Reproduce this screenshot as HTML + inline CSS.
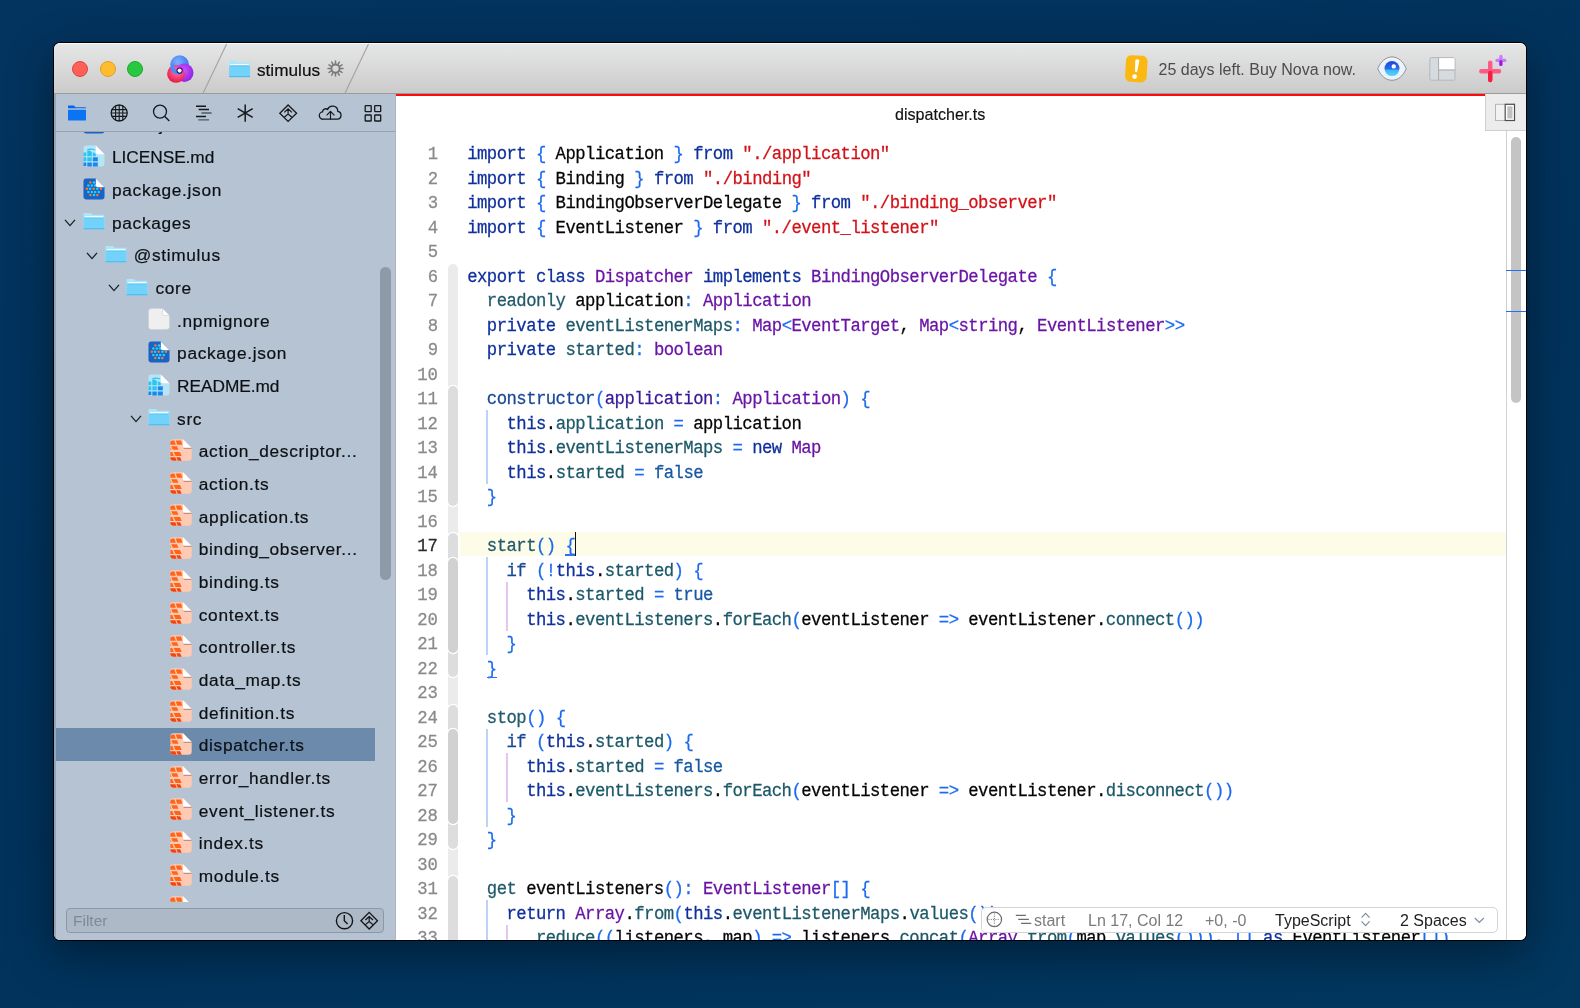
<!DOCTYPE html>
<html><head><meta charset="utf-8">
<style>
*{margin:0;padding:0;box-sizing:border-box}
html,body{width:1580px;height:1008px;overflow:hidden}
body{background:linear-gradient(160deg,#03345f 0%,#01325c 55%,#02375f 100%);font-family:"Liberation Sans",sans-serif;position:relative}
.abs{position:absolute}
#win{position:absolute;left:53px;top:42px;width:1474px;height:899px;border-radius:7px;background:#000;box-shadow:0 14px 45px rgba(0,0,0,.4);overflow:hidden}
#inner{position:absolute;left:1px;top:1px;width:1472px;height:897px;border-radius:6px;overflow:hidden;background:#fff}
/* coords inside #inner are offset by (54,43) */
#title{position:absolute;left:54px;top:43px;width:1472px;height:51px;overflow:hidden;background:linear-gradient(#e6e7e7,#d9d9d9 50%,#cbcbcb);border-bottom:1px solid #9c9c9c;box-shadow:inset 0 1px 0 #fafafa;z-index:5}
#sidebar{position:absolute;left:54px;top:93px;width:342px;height:847px;background:#b5c3d2;border-right:1px solid #abb4be;overflow:hidden}
#editor{position:absolute;left:396px;top:93px;width:1130px;height:847px;background:#fff;overflow:hidden}
#pg{position:absolute;left:-54px;top:-43px;width:1580px;height:1008px;will-change:transform}
.g{position:absolute;left:-54px;top:-93px;width:1580px;height:1008px}
#title .g{top:-43px}
#editor .g{left:-396px}
.cl{position:absolute;left:467.2px;height:24.5px;line-height:24.5px;font-family:"Liberation Mono",monospace;font-size:17.3px;letter-spacing:-0.5457px;white-space:pre;color:#050505;transform:scaleY(1.1);transform-origin:0 16.5px;-webkit-text-stroke:0.25px currentColor}
.ln{position:absolute;left:400px;width:38px;text-align:right;height:24.5px;line-height:24.5px;font-family:"Liberation Mono",monospace;font-size:17.3px;color:#8a8a8a;transform:scaleY(1.1);transform-origin:0 16.5px;-webkit-text-stroke:0.25px currentColor}
.ln.cur{color:#2a2a2a}
.k{color:#0f309c}.d{color:#215a6c}.c{color:#1a4898}.t{color:#6a14a6}.p{color:#1c5868}.v{color:#3a1898}.o{color:#1a6af0}.s{color:#d21218}.b{color:#1758a4}.n{color:#050505}
.u{}
.fold{position:absolute;left:448px;width:9.5px;border-radius:5px;box-shadow:0 0 0 1.2px #fff}
.guide{position:absolute;width:1.6px}
.fn{position:absolute;font-size:17.3px;letter-spacing:0.68px;line-height:24px;color:#0c1014;white-space:nowrap;-webkit-text-stroke:0.2px currentColor}
.ts{-webkit-text-stroke:0.2px currentColor}
.ico,.chev{position:absolute}
</style></head><body>

<svg width="0" height="0" style="position:absolute">
<defs>
 <symbol id="i-ts" viewBox="0 0 22 22">
  <path d="M3.2 0.3 H13 L21.7 9 V18.6 Q21.7 21.8 18.5 21.8 H3.5 Q0.3 21.8 0.3 18.6 V3.5 Q0.3 0.3 3.2 0.3Z" fill="#ffcab4"/>
  <g fill="#ff6418">
   <path d="M2.5 1.6 H4.4 L5.8 5.7 H0.4 V3.2 Q0.6 1.6 2.5 1.6Z"/>
   <path d="M5.8 1.6 H11 L12.4 5.7 H7.2Z"/>
   <path d="M1.2 7.3 H6.9 L8.5 10.8 H2.8Z M0.4 8.2 L1.4 10.8 H0.4Z"/>
   <path d="M0.4 12.9 H2.3 L3.9 16.9 H0.4Z"/>
   <path d="M3.7 12.9 H9.9 L11.7 16.9 H5.5Z"/>
  </g>
  <g fill="#f2440e">
   <path d="M0.4 18.2 H5.3 L6.7 21.8 H3.2 Q0.6 21.6 0.4 19.2Z"/>
   <path d="M6.3 18.2 H10.1 L11.7 21.8 H7.8Z"/>
  </g>
  <path d="M13 0.3 L21.7 9 H15.6 Q13 9 13 6.4Z" fill="#fff"/>
  <path d="M13.6 9.3 H21.6" stroke="#b07868" stroke-width="0.9"/>
 </symbol>
 <symbol id="i-md" viewBox="0 0 22 22">
  <path d="M3 0.5 H12.8 L21.5 9.2 V18.5 Q21.5 21.5 18.5 21.5 H3.5 Q0.5 21.5 0.5 18.5 V3.5 Q0.5 0.5 3 0.5Z" fill="#b5e5f6"/>
  <g fill="#2ec3f0">
   <path d="M0.5 7.5 H3.3 V11.2 H0.5Z"/>
   <path d="M4.3 11.2 V6 Q6.5 4.5 8.8 7 V11.2Z"/>
   <path d="M9.8 11.2 V7.5 Q11.5 7 12.8 9.2 V11.2Z"/>
   <path d="M4 4.6 Q7.5 2.5 11.8 4.2 L12.3 5.4 Q8 4 4.3 5.6Z"/>
   <path d="M0.5 12.3 H3.3 V16.3 H0.5Z"/>
   <path d="M4.3 12.3 H8.8 V16.3 H4.3Z"/>
  </g>
  <g fill="#1a86ef">
   <path d="M9.8 12.3 H14.8 V16.3 H9.8Z"/>
   <path d="M0.5 17.4 H3.3 V21 H0.5Z M4.3 17.4 H8.8 V21.5 H4.3Z M9.8 17.4 H14.8 V21.5 H9.8Z"/>
  </g>
  <path d="M12.8 0.5 L21.5 9.2 H15.3 Q12.8 9.2 12.8 6.7Z" fill="#fff"/>
 </symbol>
 <symbol id="i-json" viewBox="0 0 22 22">
  <path d="M3 0.5 H12.8 L21.5 9.2 V18.5 Q21.5 21.5 18.5 21.5 H3.5 Q0.5 21.5 0.5 18.5 V3.5 Q0.5 0.5 3 0.5Z" fill="#1763c6"/>
  <g fill="#23d2f6"><circle cx="11" cy="4.5" r="1.25"/><circle cx="5.4" cy="7.4" r="1.25"/><circle cx="8.9" cy="7.4" r="1.25"/><circle cx="12.2" cy="7.4" r="1.25"/><circle cx="7.1" cy="10.7" r="1.25"/><circle cx="14.3" cy="10.7" r="1.25"/><circle cx="5.4" cy="13.9" r="1.25"/><circle cx="8.9" cy="13.9" r="1.25"/><circle cx="12.2" cy="13.9" r="1.25"/><circle cx="15.8" cy="13.9" r="1.25"/><circle cx="11" cy="17" r="1.25"/></g>
  <g fill="#ff7628"><circle cx="7.4" cy="4.5" r="1.25"/><circle cx="3.9" cy="10.7" r="1.25"/><circle cx="10.7" cy="10.7" r="1.25"/><circle cx="17.9" cy="10.7" r="1.25"/><circle cx="7.4" cy="17" r="1.25"/><circle cx="14.3" cy="17" r="1.25"/></g>
  <path d="M12.8 0.5 L21.5 9.2 H15.3 Q12.8 9.2 12.8 6.7Z" fill="#fff"/>
 </symbol>
 <symbol id="i-doc" viewBox="0 0 22 22">
  <path d="M3 0.5 H14.5 L21.5 7.5 V18.5 Q21.5 21.5 18.5 21.5 H3.5 Q0.5 21.5 0.5 18.5 V3.5 Q0.5 0.5 3 0.5Z" fill="#efefef" stroke="#c9ced4" stroke-width="0.6"/>
  <path d="M14.5 0.5 L21.5 7.5 H16.5 Q14.5 7.5 14.5 5.5Z" fill="#fff" stroke="#c9ced4" stroke-width="0.6"/>
 </symbol>
 <symbol id="i-folder" viewBox="0 0 22 18">
  <path d="M1.5 1 H8 L9.5 2.8 H20.5 Q21.5 2.8 21.5 4 V16.5 Q21.5 17.5 20.5 17.5 H1.5 Q0.5 17.5 0.5 16.5 V2 Q0.5 1 1.5 1Z" fill="#ade6f9"/>
  <path d="M0.5 5.6 H21.5 V16.4 Q21.5 17.6 20.3 17.6 H1.7 Q0.5 17.6 0.5 16.4Z" fill="#72d2fa"/>
  <path d="M0.5 16.8 H21.5" stroke="#5aaedb" stroke-width="0.9"/>
  <path d="M2 4.8 H20" stroke="#ffffff" stroke-width="1.3"/>
  <path d="M2 6 H20" stroke="#4fc8f6" stroke-width="0.8"/>
 </symbol>
 <symbol id="i-chev" viewBox="0 0 12 8">
  <path d="M1 0.9 L6 6.6 L11 0.9" stroke="#1b1f24" stroke-width="1.3" fill="none"/>
 </symbol>
</defs>
</svg>

<div id="win"><div id="inner"><div id="pg">
 <div id="title"><div class="g">
  <div class="abs" style="left:72.2px;top:61.4px;width:16px;height:16px;border-radius:50%;background:#fe5f57;border:0.5px solid #e0443e"></div>
  <div class="abs" style="left:99.6px;top:61.4px;width:16px;height:16px;border-radius:50%;background:#febc2e;border:0.5px solid #dea123"></div>
  <div class="abs" style="left:126.9px;top:61.4px;width:16px;height:16px;border-radius:50%;background:#28c840;border:0.5px solid #1aab29"></div>
  <svg class="abs" style="left:0;top:0" width="1580" height="100">
   <defs>
    <radialGradient id="gb" cx="0.4" cy="0.35" r="0.7"><stop offset="0" stop-color="#7fb0ff"/><stop offset="1" stop-color="#2f6ff2"/></radialGradient>
    <radialGradient id="gr" cx="0.55" cy="0.35" r="0.7"><stop offset="0" stop-color="#ff7ab8"/><stop offset="1" stop-color="#e8103a"/></radialGradient>
    <radialGradient id="gp" cx="0.4" cy="0.4" r="0.7"><stop offset="0" stop-color="#d45cff"/><stop offset="1" stop-color="#8a1ae0"/></radialGradient>
    <linearGradient id="giris" x1="0" y1="0" x2="0" y2="1"><stop offset="0" stop-color="#1a46dc"/><stop offset="0.52" stop-color="#2a6cf0"/><stop offset="0.62" stop-color="#3fb8f6"/><stop offset="1" stop-color="#5ad6fa"/></linearGradient>
   </defs>
   <!-- nova logo -->
   <circle cx="179.6" cy="64.6" r="9.3" fill="url(#gb)"/>
   <circle cx="184.3" cy="72.8" r="9.2" fill="url(#gp)"/>
   <circle cx="176" cy="73.9" r="8.9" fill="url(#gr)"/>
   <path d="M170.6 66 Q170.5 74 178 74.5 Q183 74.5 183.5 70 Q180 72.5 176.5 70 Q173.5 68 174 63 Z" fill="#4b8cf7"/>
   <path d="M176 66.5 Q179.5 64.5 183 66.5 Q185 69 183.5 72 Q181 67.5 176 66.5Z" fill="#c83cf5"/>
   <circle cx="179.6" cy="70.6" r="3.1" fill="#2a0a5a"/>
   <circle cx="179.6" cy="70.6" r="2.1" fill="#fff4e8"/>
   <!-- slashes -->
   <path d="M226.6 44 L203.2 93 M368.5 44 L345.1 93" stroke="#a2a2a2" stroke-width="1.1"/>
   <!-- folder -->
   <svg x="228.6" y="59.8" width="22" height="18" viewBox="0 0 22 18"><use href="#i-folder"/></svg>
   <!-- gear -->
   <g transform="translate(335.5 68.6)" stroke="#7a7a7a" fill="none">
    <circle r="4.1" stroke-width="1.9"/>
    <path d="M0 -7.5V-5 M0 7.5V5 M-7.5 0H-5 M7.5 0H5 M3.75 -6.5L2.5 -4.33 M-3.75 6.5L-2.5 4.33 M-3.75 -6.5L-2.5 -4.33 M3.75 6.5L2.5 4.33 M6.5 -3.75L4.33 -2.5 M-6.5 3.75L-4.33 2.5 M-6.5 -3.75L-4.33 -2.5 M6.5 3.75L4.33 2.5" stroke-width="1.5" stroke-linecap="round"/>
   </g>
   <!-- badge -->
   <rect x="-10.8" y="-13.3" width="21.6" height="26.6" rx="5.5" transform="translate(1136.3 68.8) rotate(3.5)" fill="#fcb812"/>
   <path d="M1135.3 60 Q1137.6 58.3 1139.4 60.3 L1137.2 71.6 Q1136.2 73 1135 71.5 Z" fill="#fff"/>
   <circle cx="1134.6" cy="76.6" r="2.4" fill="#fff"/>
   <!-- eye -->
   <path d="M1377.8 68.6 C1380.5 61.5 1386 56.9 1392 56.9 C1398 56.9 1403.5 61.5 1406.2 68.6 C1403.5 75.7 1398 80.3 1392 80.3 C1386 80.3 1380.5 75.7 1377.8 68.6Z" fill="#eef2fb" stroke="#8794a1" stroke-width="1"/>
   <circle cx="1392" cy="68.6" r="7.5" fill="url(#giris)"/>
   <circle cx="1393.8" cy="66.4" r="2.2" fill="#fff"/>
   <!-- layout -->
   <rect x="1429.8" y="57.6" width="25.2" height="22.6" rx="1.6" fill="#d5dbdf" stroke="#b3b3b3" stroke-width="0.9"/>
   <rect x="1438.8" y="58.1" width="15.7" height="11.6" fill="#fff"/>
   <path d="M1438.6 58 V80 M1438.6 70 H1454.8" stroke="#a9a9a9" stroke-width="1"/>
   <!-- plus -->
   <path d="M1490.2 62.6 V80.1 M1481.3 71.3 H1499" stroke="#fe5a88" stroke-width="4.4" stroke-linecap="round"/>
   <path d="M1490.2 73 V80.1" stroke="#f5203f" stroke-width="4.4" stroke-linecap="round"/>
   <path d="M1500.9 56.4 V64.4 M1497 60.4 H1504.9" stroke="#c77cfa" stroke-width="3.2" stroke-linecap="round"/>
   <path d="M1500.9 61.5 V64.4" stroke="#a012e8" stroke-width="3" stroke-linecap="round"/>
  </svg>
  <div class="abs" style="left:257px;top:58px;font-size:17.2px;line-height:24px;color:#111;-webkit-text-stroke:0.2px #111">stimulus</div>
  <div class="abs" style="left:1158.5px;top:57.5px;font-size:16px;line-height:24px;color:#4c4c4c">25 days left. Buy Nova now.</div>
 </div></div>
 <div id="sidebar"><div class="g">
  <div class="abs" style="left:54px;top:727.5px;width:320.5px;height:33.5px;background:#6c8aab"></div>
  <svg class="ico" style="left:83.0px;top:112.3px" width="22" height="22"><use href="#i-json"/></svg>
<div class="fn" style="left:112.0px;top:112.7px">lerna.json</div>
<svg class="ico" style="left:83.0px;top:145.0px" width="22" height="22"><use href="#i-md"/></svg>
<div class="fn" style="left:112.0px;top:145.4px;letter-spacing:-0.05px">LICENSE.md</div>
<svg class="ico" style="left:83.0px;top:177.7px" width="22" height="22"><use href="#i-json"/></svg>
<div class="fn" style="left:112.0px;top:178.1px">package.json</div>
<svg class="chev" style="left:64.4px;top:219.1px" width="12" height="8"><use href="#i-chev"/></svg>
<svg class="ico" style="left:83.0px;top:212.3px" width="22" height="18"><use href="#i-folder"/></svg>
<div class="fn" style="left:112.0px;top:210.7px">packages</div>
<svg class="chev" style="left:86.1px;top:251.8px" width="12" height="8"><use href="#i-chev"/></svg>
<svg class="ico" style="left:104.7px;top:245.0px" width="22" height="18"><use href="#i-folder"/></svg>
<div class="fn" style="left:133.7px;top:243.4px">@stimulus</div>
<svg class="chev" style="left:107.8px;top:284.4px" width="12" height="8"><use href="#i-chev"/></svg>
<svg class="ico" style="left:126.4px;top:277.6px" width="22" height="18"><use href="#i-folder"/></svg>
<div class="fn" style="left:155.4px;top:276.0px">core</div>
<svg class="ico" style="left:148.1px;top:308.3px" width="22" height="22"><use href="#i-doc"/></svg>
<div class="fn" style="left:177.1px;top:308.7px">.npmignore</div>
<svg class="ico" style="left:148.1px;top:341.0px" width="22" height="22"><use href="#i-json"/></svg>
<div class="fn" style="left:177.1px;top:341.4px">package.json</div>
<svg class="ico" style="left:148.1px;top:373.6px" width="22" height="22"><use href="#i-md"/></svg>
<div class="fn" style="left:177.1px;top:374.0px;letter-spacing:-0.05px">README.md</div>
<svg class="chev" style="left:129.5px;top:415.1px" width="12" height="8"><use href="#i-chev"/></svg>
<svg class="ico" style="left:148.1px;top:408.3px" width="22" height="18"><use href="#i-folder"/></svg>
<div class="fn" style="left:177.1px;top:406.7px">src</div>
<svg class="ico" style="left:169.8px;top:438.9px" width="22" height="22"><use href="#i-ts"/></svg>
<div class="fn" style="left:198.8px;top:439.3px">action_descriptor...</div>
<svg class="ico" style="left:169.8px;top:471.6px" width="22" height="22"><use href="#i-ts"/></svg>
<div class="fn" style="left:198.8px;top:472.0px">action.ts</div>
<svg class="ico" style="left:169.8px;top:504.3px" width="22" height="22"><use href="#i-ts"/></svg>
<div class="fn" style="left:198.8px;top:504.7px">application.ts</div>
<svg class="ico" style="left:169.8px;top:536.9px" width="22" height="22"><use href="#i-ts"/></svg>
<div class="fn" style="left:198.8px;top:537.3px">binding_observer...</div>
<svg class="ico" style="left:169.8px;top:569.6px" width="22" height="22"><use href="#i-ts"/></svg>
<div class="fn" style="left:198.8px;top:570.0px">binding.ts</div>
<svg class="ico" style="left:169.8px;top:602.2px" width="22" height="22"><use href="#i-ts"/></svg>
<div class="fn" style="left:198.8px;top:602.6px">context.ts</div>
<svg class="ico" style="left:169.8px;top:634.9px" width="22" height="22"><use href="#i-ts"/></svg>
<div class="fn" style="left:198.8px;top:635.3px">controller.ts</div>
<svg class="ico" style="left:169.8px;top:667.6px" width="22" height="22"><use href="#i-ts"/></svg>
<div class="fn" style="left:198.8px;top:668.0px">data_map.ts</div>
<svg class="ico" style="left:169.8px;top:700.2px" width="22" height="22"><use href="#i-ts"/></svg>
<div class="fn" style="left:198.8px;top:700.6px">definition.ts</div>
<svg class="ico" style="left:169.8px;top:732.9px" width="22" height="22"><use href="#i-ts"/></svg>
<div class="fn" style="left:198.8px;top:733.3px">dispatcher.ts</div>
<svg class="ico" style="left:169.8px;top:765.5px" width="22" height="22"><use href="#i-ts"/></svg>
<div class="fn" style="left:198.8px;top:765.9px">error_handler.ts</div>
<svg class="ico" style="left:169.8px;top:798.2px" width="22" height="22"><use href="#i-ts"/></svg>
<div class="fn" style="left:198.8px;top:798.6px">event_listener.ts</div>
<svg class="ico" style="left:169.8px;top:830.9px" width="22" height="22"><use href="#i-ts"/></svg>
<div class="fn" style="left:198.8px;top:831.3px">index.ts</div>
<svg class="ico" style="left:169.8px;top:863.5px" width="22" height="22"><use href="#i-ts"/></svg>
<div class="fn" style="left:198.8px;top:863.9px">module.ts</div>
<svg class="ico" style="left:169.8px;top:896.2px" width="22" height="22"><use href="#i-ts"/></svg>
<div class="fn" style="left:198.8px;top:896.6px">mutation.ts</div>
  <div class="abs" style="left:54px;top:93px;width:341px;height:38.5px;background:#b5c3d2;border-bottom:1px solid #97a3b0"></div>
  <svg class="abs" style="left:0;top:0" width="400" height="140">
   <path d="M68 106.2 Q68 105.5 68.7 105.5 H73.8 L75.6 107.2 H85.3 Q86 107.2 86 107.9 V108.3 H68Z" fill="#0a62f5"/>
   <rect x="68" y="109.8" width="18" height="10.6" rx="0.6" fill="#0a74f5"/>
   <g stroke="#15191c" fill="none" stroke-width="1.3">
    <circle cx="119.2" cy="113" r="8"/>
    <path d="M111.5 109.6 H127 M111.2 113 H127.2 M111.5 116.4 H127" stroke-width="1.1"/>
    <path d="M115.6 105.5 V120.5 M119.2 105 V121 M122.8 105.5 V120.5" stroke-width="1.1"/>
    <circle cx="160" cy="111.6" r="6.5"/>
    <path d="M164.6 116.2 L169.3 120.9" stroke-width="1.4"/>
   </g>
   <g stroke-width="1.4">
    <path d="M196 106.2 H206 M198.7 109.5 H209 M196 116.5 H206" stroke="#15191c"/>
    <path d="M201.4 113 H211.6 M198.3 119.9 H209" stroke="#4e5a66"/>
   </g>
   <g stroke="#15191c" fill="none" stroke-width="1.5">
    <path d="M245.2 104.5 V121.8 M237.7 108.7 L252.7 117.3 M237.7 117.3 L252.7 108.7"/>
    <path d="M288.1 105 L296.6 113.2 L288.1 121.4 L279.8 113.2Z" stroke-width="1.3"/>
    <path d="M284.3 112.4 L288.1 108.8 L291.9 112.4 M284.3 117.2 L288.1 114 L291.9 117.2 M288.1 109 V114.5" stroke-width="1.2"/>
    <path d="M323.5 119.2 H337.5 A4 4 0 0 0 337.8 111.3 A5.3 5.3 0 0 0 327.6 109.4 A3.2 3.2 0 0 0 322.5 111.9 A3.6 3.6 0 0 0 323.5 119.2Z" stroke-width="1.3"/>
    <path d="M330.5 119.4 V111.6 M326.6 115.4 L330.5 111.4 L334.4 115.4" stroke-width="1.2"/>
    <rect x="365.2" y="105.7" width="6" height="6" rx="0.6" stroke-width="1.3"/>
    <rect x="374.7" y="105.7" width="6" height="6" rx="0.6" stroke-width="1.3"/>
    <rect x="365.2" y="115" width="6" height="6" rx="0.6" stroke-width="1.3"/>
    <rect x="374.7" y="115" width="6" height="6" rx="0.6" stroke-width="1.3"/>
   </g>
  </svg>
  <div class="abs" style="left:380px;top:267px;width:11px;height:313px;border-radius:6px;background:#8e9aa7"></div>
  <div class="abs" style="left:54px;top:902px;width:341px;height:38px;background:#b5c3d2"></div>
  <div class="abs" style="left:54px;top:93px;width:1.5px;height:847px;background:#97a6b6"></div>
  <div class="abs" style="left:65.5px;top:908px;width:318px;height:25px;border-radius:4px;background:#adb9c6;border:1px solid #8d98a4"></div>
  <div class="abs" style="left:73px;top:909px;font-size:15.5px;line-height:23px;color:#7f8a96">Filter</div>
  <svg class="abs" style="left:0;top:890px" width="400" height="50">
   <g stroke="#121518" fill="none" stroke-width="1.4" transform="translate(0 -890)">
    <circle cx="344.5" cy="920.7" r="8.1"/>
    <path d="M344.3 915 V920.8 L347.6 924"/>
    <path d="M369.2 912.4 L377.5 920.7 L369.2 929 L360.9 920.7Z" stroke-width="1.3"/>
    <path d="M365.4 920 L369.2 916.5 L373 920 M365.4 924.6 L369.2 921.5 L373 924.6 M369.2 916.6 V922" stroke-width="1.2"/>
   </g>
  </svg>
 </div></div>
 <div id="editor"><div class="g">
  <div class="abs" style="left:396px;top:94px;width:1089px;height:2.2px;background:#fe0a0a"></div>
  <div class="abs" style="left:0;top:103px;width:1580px;text-align:center;font-size:16px;line-height:20px;color:#1a1a1a;padding-left:300px"> </div>
  <div class="abs" style="left:895px;top:104.3px;font-size:16.1px;line-height:20px;color:#111;-webkit-text-stroke:0.15px #111">dispatcher.ts</div>
  <div class="abs" style="left:1485px;top:93px;width:41px;height:38px;background:#ececec;border-left:1px solid #cfcfcf;border-bottom:1px solid #cfcfcf"></div>
  <div class="abs" style="left:460px;top:531.5px;width:1046px;height:24.3px;background:#fdfce8"></div>
  <div class="fold" style="top:263.5px;height:736.5px;background:#ebebeb"></div>
<div class="fold" style="top:386.0px;height:119.5px;background:#dddddd"></div>
<div class="fold" style="top:533.0px;height:144.0px;background:#dddddd"></div>
<div class="fold" style="top:557.5px;height:95.0px;background:#d1d1d1"></div>
<div class="fold" style="top:704.5px;height:144.0px;background:#dddddd"></div>
<div class="fold" style="top:729.0px;height:95.0px;background:#d1d1d1"></div>
<div class="fold" style="top:876.0px;height:124.0px;background:#dddddd"></div>
  <div class="guide" style="left:486.0px;top:410.0px;height:73.5px;background:#bcd2f7"></div>
<div class="guide" style="left:486.0px;top:557.0px;height:98.0px;background:#bcd2f7"></div>
<div class="guide" style="left:506.0px;top:581.5px;height:49.0px;background:#e6c6f0"></div>
<div class="guide" style="left:486.0px;top:728.5px;height:98.0px;background:#bcd2f7"></div>
<div class="guide" style="left:506.0px;top:753.0px;height:49.0px;background:#e6c6f0"></div>
<div class="guide" style="left:486.0px;top:900.0px;height:40.0px;background:#bcd2f7"></div>
<div class="guide" style="left:506.0px;top:924.5px;height:15.5px;background:#e6c6f0"></div>
  <div class="ln" style="top:143.30px">1</div>
<div class="ln" style="top:167.80px">2</div>
<div class="ln" style="top:192.30px">3</div>
<div class="ln" style="top:216.80px">4</div>
<div class="ln" style="top:241.30px">5</div>
<div class="ln" style="top:265.80px">6</div>
<div class="ln" style="top:290.30px">7</div>
<div class="ln" style="top:314.80px">8</div>
<div class="ln" style="top:339.30px">9</div>
<div class="ln" style="top:363.80px">10</div>
<div class="ln" style="top:388.30px">11</div>
<div class="ln" style="top:412.80px">12</div>
<div class="ln" style="top:437.30px">13</div>
<div class="ln" style="top:461.80px">14</div>
<div class="ln" style="top:486.30px">15</div>
<div class="ln" style="top:510.80px">16</div>
<div class="ln cur" style="top:535.30px">17</div>
<div class="ln" style="top:559.80px">18</div>
<div class="ln" style="top:584.30px">19</div>
<div class="ln" style="top:608.80px">20</div>
<div class="ln" style="top:633.30px">21</div>
<div class="ln" style="top:657.80px">22</div>
<div class="ln" style="top:682.30px">23</div>
<div class="ln" style="top:706.80px">24</div>
<div class="ln" style="top:731.30px">25</div>
<div class="ln" style="top:755.80px">26</div>
<div class="ln" style="top:780.30px">27</div>
<div class="ln" style="top:804.80px">28</div>
<div class="ln" style="top:829.30px">29</div>
<div class="ln" style="top:853.80px">30</div>
<div class="ln" style="top:878.30px">31</div>
<div class="ln" style="top:902.80px">32</div>
<div class="ln" style="top:927.30px">33</div>
  <div class="cl" style="top:143.30px"><span class="k">import</span> <span class="o">{</span> Application <span class="o">}</span> <span class="k">from</span> <span class="s">&quot;./application&quot;</span></div>
<div class="cl" style="top:167.80px"><span class="k">import</span> <span class="o">{</span> Binding <span class="o">}</span> <span class="k">from</span> <span class="s">&quot;./binding&quot;</span></div>
<div class="cl" style="top:192.30px"><span class="k">import</span> <span class="o">{</span> BindingObserverDelegate <span class="o">}</span> <span class="k">from</span> <span class="s">&quot;./binding_observer&quot;</span></div>
<div class="cl" style="top:216.80px"><span class="k">import</span> <span class="o">{</span> EventListener <span class="o">}</span> <span class="k">from</span> <span class="s">&quot;./event_listener&quot;</span></div>
<div class="cl" style="top:241.30px"></div>
<div class="cl" style="top:265.80px"><span class="k">export</span> <span class="k">class</span> <span class="t">Dispatcher</span> <span class="k">implements</span> <span class="t">BindingObserverDelegate</span> <span class="o">{</span></div>
<div class="cl" style="top:290.30px">  <span class="d">readonly</span> application<span class="o">:</span> <span class="t">Application</span></div>
<div class="cl" style="top:314.80px">  <span class="k">private</span> <span class="p">eventListenerMaps</span><span class="o">:</span> <span class="t">Map</span><span class="o">&lt;</span><span class="t">EventTarget</span>, <span class="t">Map</span><span class="o">&lt;</span><span class="t">string</span>, <span class="t">EventListener</span><span class="o">&gt;&gt;</span></div>
<div class="cl" style="top:339.30px">  <span class="k">private</span> <span class="p">started</span><span class="o">:</span> <span class="t">boolean</span></div>
<div class="cl" style="top:363.80px"></div>
<div class="cl" style="top:388.30px">  <span class="c">constructor</span><span class="o">(</span><span class="v">application</span><span class="o">:</span> <span class="t">Application</span><span class="o">)</span> <span class="o">{</span></div>
<div class="cl" style="top:412.80px">    <span class="k">this</span>.<span class="p">application</span> <span class="o">=</span> application</div>
<div class="cl" style="top:437.30px">    <span class="k">this</span>.<span class="p">eventListenerMaps</span> <span class="o">=</span> <span class="k">new</span> <span class="t">Map</span></div>
<div class="cl" style="top:461.80px">    <span class="k">this</span>.<span class="p">started</span> <span class="o">=</span> <span class="b">false</span></div>
<div class="cl" style="top:486.30px">  <span class="o">}</span></div>
<div class="cl" style="top:510.80px"></div>
<div class="cl" style="top:535.30px">  <span class="d">start</span><span class="o">()</span> <span class="o u">{</span></div>
<div class="cl" style="top:559.80px">    <span class="c">if</span> <span class="o">(!</span><span class="k">this</span>.<span class="p">started</span><span class="o">)</span> <span class="o">{</span></div>
<div class="cl" style="top:584.30px">      <span class="k">this</span>.<span class="p">started</span> <span class="o">=</span> <span class="b">true</span></div>
<div class="cl" style="top:608.80px">      <span class="k">this</span>.<span class="p">eventListeners</span>.<span class="p">forEach</span><span class="o">(</span>eventListener <span class="o">=&gt;</span> eventListener.<span class="p">connect</span><span class="o">())</span></div>
<div class="cl" style="top:633.30px">    <span class="o">}</span></div>
<div class="cl" style="top:657.80px">  <span class="o u">}</span></div>
<div class="cl" style="top:682.30px"></div>
<div class="cl" style="top:706.80px">  <span class="d">stop</span><span class="o">()</span> <span class="o">{</span></div>
<div class="cl" style="top:731.30px">    <span class="c">if</span> <span class="o">(</span><span class="k">this</span>.<span class="p">started</span><span class="o">)</span> <span class="o">{</span></div>
<div class="cl" style="top:755.80px">      <span class="k">this</span>.<span class="p">started</span> <span class="o">=</span> <span class="b">false</span></div>
<div class="cl" style="top:780.30px">      <span class="k">this</span>.<span class="p">eventListeners</span>.<span class="p">forEach</span><span class="o">(</span>eventListener <span class="o">=&gt;</span> eventListener.<span class="p">disconnect</span><span class="o">())</span></div>
<div class="cl" style="top:804.80px">    <span class="o">}</span></div>
<div class="cl" style="top:829.30px">  <span class="o">}</span></div>
<div class="cl" style="top:853.80px"></div>
<div class="cl" style="top:878.30px">  <span class="d">get</span> eventListeners<span class="o">():</span> <span class="t">EventListener</span><span class="o">[]</span> <span class="o">{</span></div>
<div class="cl" style="top:902.80px">    <span class="k">return</span> <span class="t">Array</span>.<span class="p">from</span><span class="o">(</span><span class="k">this</span>.<span class="p">eventListenerMaps</span>.<span class="p">values</span><span class="o">())</span></div>
<div class="cl" style="top:927.30px">      .<span class="p">reduce</span><span class="o">((</span>listeners, map<span class="o">)</span> <span class="o">=&gt;</span> listeners.<span class="p">concat</span><span class="o">(</span><span class="t">Array</span>.<span class="p">from</span><span class="o">(</span>map.<span class="p">values</span><span class="o">()))</span>, <span class="o">[]</span> <span class="k">as</span> EventListener<span class="o">[])</span></div>
  <div class="abs" style="left:575.2px;top:531.5px;width:1.2px;height:24px;background:#111"></div>
  <div class="abs" style="left:565.4px;top:554px;width:9.8px;height:1.5px;background:#2a72f0"></div>
  <div class="abs" style="left:486.6px;top:676.6px;width:10px;height:1.5px;background:#2a72f0"></div>
  <div class="abs" style="left:1505.5px;top:131px;width:21px;height:809px;background:#fff;border-left:1px solid #d2d2d2"></div>
  <div class="abs" style="left:1511px;top:137px;width:10px;height:266px;border-radius:5px;background:#c4c4c4"></div>
  <div class="abs" style="left:1506px;top:270px;width:20px;height:1px;background:#1e6ff2"></div>
  <div class="abs" style="left:1506px;top:311px;width:20px;height:1px;background:#1e6ff2"></div>
  <div class="abs" style="left:981px;top:907px;width:517px;height:26px;border-radius:5px;background:rgba(255,255,255,.96);border:1px solid #d4d4d4"></div>
  <svg class="abs" style="left:0;top:0" width="1580" height="1008">
   <rect x="1495.5" y="104.3" width="19" height="16.2" fill="#f2f2f2" stroke="#b5b5b5" stroke-width="1"/>
   <rect x="1505.2" y="104.3" width="9.3" height="16.2" fill="#fff" stroke="#4d4d4d" stroke-width="1.2"/>
   <rect x="1507.3" y="106.3" width="5.2" height="12.2" fill="#c1c1c1"/>
   <g stroke="#6d6d6d" fill="none">
    <circle cx="994.4" cy="919.4" r="7.2" stroke-width="1.2"/>
    <path d="M994.4 913.5 V925.3 M988.5 919.4 H1000.3" stroke-width="1" stroke-dasharray="1 1.3"/>
    <path d="M1015.8 915.4 H1025.9 M1018.2 919.4 H1028.9 M1021.1 923.4 H1031.3" stroke-width="1.2"/>
    <path d="M1361.6 917.6 L1365.6 913.4 L1369.6 917.6 M1361.6 921.4 L1365.6 925.6 L1369.6 921.4" stroke="#7f8c9a" stroke-width="1.2"/>
    <path d="M1474.8 918 L1479.3 922.5 L1483.8 918" stroke="#7f8c9a" stroke-width="1.2"/>
   </g>
  </svg>
  <div class="abs" style="left:1034px;top:910px;font-size:16px;line-height:22px;color:#7b7b7b">start</div>
  <div class="abs" style="left:1088px;top:910px;font-size:16px;line-height:22px;color:#7b7b7b">Ln 17, Col 12</div>
  <div class="abs" style="left:1205px;top:910px;font-size:16px;line-height:22px;color:#7b7b7b">+0, -0</div>
  <div class="abs" style="left:1275px;top:910px;font-size:16px;line-height:22px;color:#1e1e1e">TypeScript</div>
  <div class="abs" style="left:1400px;top:910px;font-size:16px;line-height:22px;color:#1e1e1e">2 Spaces</div>
 </div></div>
</div></div></div>
</body></html>
